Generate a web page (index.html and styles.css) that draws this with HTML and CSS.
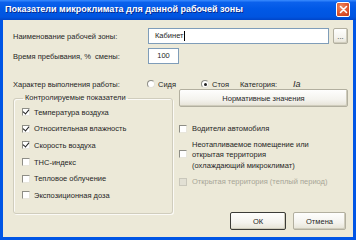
FILE: index.html
```html
<!DOCTYPE html>
<html lang="ru">
<head>
    <meta charset="UTF-8">
    <title>Показатели микроклимата для данной рабочей зоны</title>
    <link rel="stylesheet" href="styles.css">
</head>
<body>
    <div class="window">
        <div class="titlebar">
            <span class="title">Показатели микроклимата для данной рабочей зоны</span>
            <span class="close">
                <svg width="9" height="9" viewBox="0 0 9 9"><path d="M1.5 1.5 L7.5 7.5 M7.5 1.5 L1.5 7.5" stroke="#fff" stroke-width="1.6" stroke-linecap="round"/></svg>
            </span>
        </div>

        <div class="content">
            <div class="field-row">
                <span class="label">Наименование рабочей зоны:</span>
                <span class="textbox wide">Кабинет<span class="caret"></span></span>
                <span class="btn browse">...</span>
            </div>

            <div class="field-row second">
                <span class="label">Время пребывания, %&nbsp; смены:</span>
                <span class="textbox short">100</span>
            </div>

            <div class="mode-row">
                <span class="label mode-label">Характер выполнения работы:</span>
                <span class="option sit"><span class="radio"></span>Сидя</span>
                <span class="option stand"><span class="radio checked"></span>Стоя</span>
                <span class="category">Категория:</span>
                <span class="category-value">Iа</span>
            </div>

            <div class="lower">
                <fieldset class="group">
                    <legend>Контролируемые показатели</legend>
                    <div class="check-row"><span class="check checked"></span>Температура воздуха</div>
                    <div class="check-row"><span class="check checked"></span>Относительная влажность</div>
                    <div class="check-row"><span class="check checked"></span>Скорость воздуха</div>
                    <div class="check-row"><span class="check"></span>ТНС-индекс</div>
                    <div class="check-row"><span class="check"></span>Тепловое облучение</div>
                    <div class="check-row"><span class="check"></span>Экспозиционная доза</div>
                </fieldset>

                <div class="side">
                    <span class="btn norm">Нормативные значения</span>
                    <div class="side-check drivers"><span class="check"></span>Водители автомобиля</div>
                    <div class="side-check unheated">
                        <span class="check"></span>
                        <span class="multi">Неотапливаемое помещение или<br>открытая территория</span>
                    </div>
                    <div class="note">(охлаждающий микроклимат)</div>
                    <div class="side-check disabled"><span class="check"></span>Открытая территория (теплый период)</div>

                    <div class="actions">
                        <span class="btn ok">ОК</span>
                        <span class="btn cancel">Отмена</span>
                    </div>
                </div>
            </div>
        </div>
    </div>
</body>
</html>
```

FILE: styles.css
```css
html, body {
    margin: 0;
    padding: 0;
}

body {
    font-family: "Liberation Sans", Arial, sans-serif;
    font-size: 7.5px;
    color: #262626;
    background: #0055e5;
}

.window {
    width: 356px;
    height: 240px;
    display: flex;
    flex-direction: column;
    background: #0055e5;
}

.titlebar {
    height: 20px;
    flex: none;
    display: flex;
    align-items: center;
    justify-content: space-between;
    padding: 0 6px 2px 5px;
    box-sizing: border-box;
    background: linear-gradient(#3a8cff 0%, #0b61ec 12%, #0058e6 45%, #0054e0 85%, #0045c8 100%);
}

.title {
    color: #fff;
    font-weight: bold;
    font-size: 9px;
    text-shadow: 1px 1px 0 #0a2a8a;
    white-space: nowrap;
}

.close {
    width: 12px;
    height: 13px;
    display: flex;
    align-items: center;
    justify-content: center;
    border: 1px solid #fff;
    border-radius: 2px;
    background: radial-gradient(circle at 35% 30%, #f08a60 0%, #e0552c 55%, #c23a1a 100%);
}

.content {
    flex: 1;
    margin: 0 3px 3px;
    padding: 8px 5px 0 10px;
    background: #ece9d8;
}

.field-row {
    height: 16px;
    display: flex;
    align-items: center;
}

.field-row.second {
    margin-top: 4px;
}

.label {
    width: 135px;
    flex: none;
    white-space: nowrap;
}

.textbox {
    height: 16px;
    box-sizing: border-box;
    border: 1px solid #7f9db9;
    background: #fff;
    display: flex;
    align-items: center;
    line-height: 10px;
}

.textbox.wide {
    width: 181px;
    padding-left: 6px;
}

.textbox.short {
    width: 31px;
    justify-content: center;
}

.caret {
    width: 1px;
    height: 10px;
    background: #000;
}

.btn {
    box-sizing: border-box;
    display: flex;
    align-items: center;
    justify-content: center;
    border: 1px solid #b2af9f;
    border-radius: 2px;
    background: linear-gradient(#fefefd 0%, #f4f3ee 60%, #e6e3d6 100%);
    box-shadow: inset -1px -1px 0 #cfccbc;
    white-space: nowrap;
}

.browse {
    width: 15px;
    height: 16px;
    margin-left: 4px;
    align-items: flex-end;
    padding-bottom: 3px;
    line-height: 6px;
}

.mode-row {
    margin-top: 14px;
    height: 12px;
    display: flex;
    align-items: center;
}

.mode-label {
    width: 134px;
}

.option {
    display: flex;
    align-items: center;
    gap: 3px;
}

.option.sit {
    width: 54px;
}

.option.stand {
    width: 39px;
}

.radio {
    width: 8px;
    height: 8px;
    box-sizing: border-box;
    border-radius: 50%;
    border: 1px solid #8e8e86;
    border-right-color: #e4e2d8;
    border-bottom-color: #e4e2d8;
    background: #fff;
    display: flex;
    align-items: center;
    justify-content: center;
}

.radio.checked::after {
    content: "";
    width: 3px;
    height: 3px;
    border-radius: 50%;
    background: #222;
}

.category {
    width: 53px;
}

.category-value {
    font-style: italic;
    font-size: 9px;
}

.lower {
    margin-top: -1px;
    height: 141px;
    display: flex;
    gap: 6px;
}

.group {
    width: 162px;
    height: 121px;
    box-sizing: border-box;
    margin: 4px 0 0;
    padding: 1px 0 0 8px;
    border: 1px solid #d0cdbd;
    border-radius: 3px;
    box-shadow: 1px 1px 0 #fbfaf6, inset 1px 1px 0 #fbfaf6;
}

.group legend {
    margin-left: 1px;
    padding: 0 2px;
    line-height: 10px;
}

.check-row {
    height: 16.6px;
    display: flex;
    align-items: center;
    gap: 4px;
}

.check {
    width: 8px;
    height: 8px;
    flex: none;
    box-sizing: border-box;
    border: 1px solid #8e8e86;
    border-right-color: #e8e6dc;
    border-bottom-color: #e8e6dc;
    background: #fff;
    display: flex;
    align-items: center;
    justify-content: center;
}

.check.checked::after {
    content: "";
    width: 3px;
    height: 5px;
    margin-top: -2px;
    border: solid #222;
    border-width: 0 1.5px 1.5px 0;
    transform: rotate(40deg);
}

.side {
    width: 169px;
    display: flex;
    flex-direction: column;
}

.norm {
    height: 18px;
    width: 169px;
}

.side-check {
    display: flex;
    align-items: center;
    gap: 5px;
    line-height: 10px;
}

.drivers {
    margin-top: 17px;
}

.unheated {
    margin-top: 6px;
    align-items: flex-start;
}

.unheated .check {
    margin-top: 10px;
}

.multi {
    line-height: 9.5px;
}

.note {
    margin-top: 1.5px;
    padding-left: 13px;
    line-height: 9.5px;
}

.disabled {
    margin-top: 7px;
    color: #a7a597;
}

.disabled .check {
    background: #e2e0d4;
    border-color: #c9c7bb;
}

.actions {
    margin-top: auto;
    display: flex;
    justify-content: flex-end;
    gap: 7px;
    padding-right: 2px;
}

.ok {
    width: 56px;
    height: 18px;
    border-color: #3c3c38;
}

.cancel {
    width: 53px;
    height: 18px;
}
```
